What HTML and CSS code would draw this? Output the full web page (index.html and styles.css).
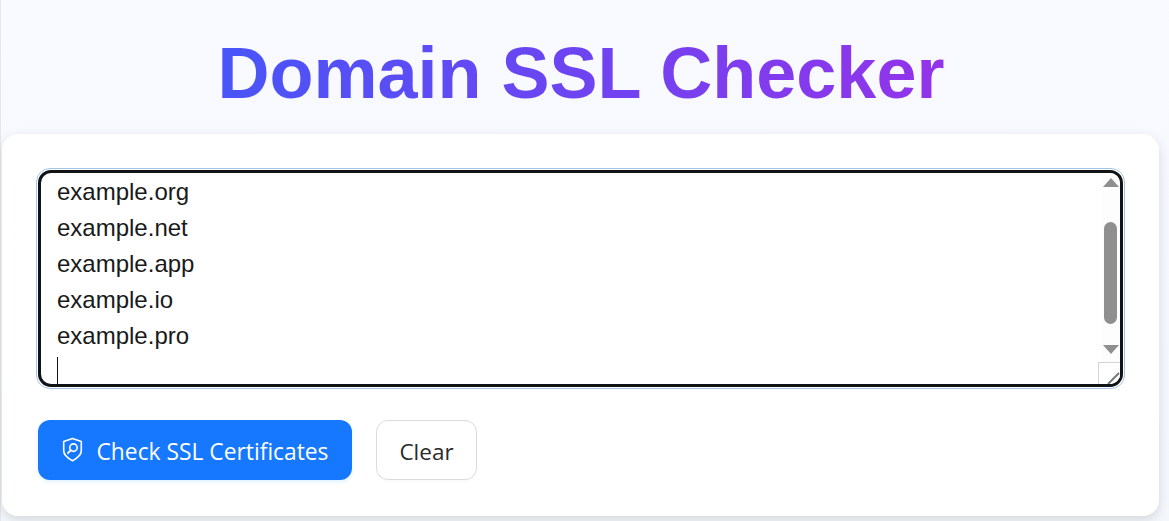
FILE: index.html
```html
<!DOCTYPE html>
<html lang="en">
<head>
<meta charset="utf-8">
<title>Domain SSL Checker</title>
<link rel="stylesheet" href="styles.css">
</head>
<body>
<main class="page">
  <h1 class="title">Domain SSL Checker</h1>
  <section class="card">
    <div class="ring">
      <div class="field">
        <div class="lines">
          <div>example.org</div>
          <div>example.net</div>
          <div>example.app</div>
          <div>example.io</div>
          <div>example.pro</div>
          <div class="caret-line"><span class="caret"></span></div>
        </div>
        <div class="scrollbar">
          <span class="arrow arrow-up"></span>
          <span class="thumb"></span>
          <span class="arrow arrow-down"></span>
        </div>
        <div class="resizer">
          <svg viewBox="0 0 22 22" width="22" height="22" aria-hidden="true"><path d="M10 22 L21 11" stroke="#777" stroke-width="2" fill="none"/></svg>
        </div>
      </div>
    </div>
    <div class="actions">
      <button class="btn btn-primary" type="button">
        <svg class="btn-icon" viewBox="0 0 22 26" width="21" height="25" aria-hidden="true">
          <path d="M11 1.4 L20.2 4.6 V14.4 C20.2 18.6 16.4 22 11 24.8 C5.6 22 1.8 18.6 1.8 14.4 V4.6 Z" fill="none" stroke="#fff" stroke-width="1.7" stroke-linejoin="round"/>
          <circle cx="12" cy="11" r="3.9" fill="none" stroke="#fff" stroke-width="1.7"/>
          <path d="M9.2 13.8 L6.2 16.8" fill="none" stroke="#fff" stroke-width="1.9" stroke-linecap="round"/>
        </svg>
        <span>Check SSL Certificates</span>
      </button>
      <button class="btn btn-default" type="button">Clear</button>
    </div>
  </section>
</main>
</body>
</html>
```
FILE: styles.css
```css
* { box-sizing: border-box; }
html, body { margin: 0; height: 100%; }
body {
  background: #f5f7fb;
  overflow: hidden;
}
.page {
  width: 1169px;
  height: 521px;
  padding-left: 2px;
  padding-right: 10px;
  background: linear-gradient(#f8faff, #f4f7fb);
  border-left: 1px solid #e6e7ec;
  display: flex;
  flex-direction: column;
}
.title {
  margin: 0;
  height: 134px;
  padding-top: 31px;
  text-align: center;
  font: 700 72px/84px "Liberation Sans", Arial, sans-serif;
  color: transparent;
  background: linear-gradient(90deg, #4855f8, #9333ea);
  background-clip: text;
  -webkit-background-clip: text;
  width: max-content;
  align-self: center;
}
.card {
  height: 382px;
  background: #fff;
  border-radius: 16px;
  padding: 34px 34px 36px 34px;
  box-shadow: 0 4px 12px rgba(0, 0, 0, .13);
  margin-left: -1px;
}
.ring {
  height: 221px;
  border: 1px solid #a5c5e6;
  border-radius: 14px;
  padding: 1px;
}
.field {
  position: relative;
  height: 100%;
  border: 3px solid #111417;
  border-radius: 13px;
  overflow: hidden;
  background: #fff;
}
.lines {
  padding-left: 16px;
  margin-top: 1px;
  font: 24px/36px "Liberation Sans", Arial, sans-serif;
  color: #1a1a1a;
}
.caret-line { height: 36px; }
.caret {
  display: block;
  width: 1px;
  height: 27px;
  background: #111;
  transform: translateY(3px);
}
.scrollbar {
  position: absolute;
  top: 0;
  right: 0;
  bottom: 0;
  width: 18px;
  background: #fdfdfd;
}
.arrow {
  position: absolute;
  left: 1px;
  width: 0;
  height: 0;
  border-left: 8px solid transparent;
  border-right: 8px solid transparent;
}
.arrow-up { top: 5px; border-bottom: 9px solid #8f8f8f; }
.arrow-down { bottom: 30px; border-top: 9px solid #8f8f8f; }
.thumb {
  position: absolute;
  left: 2px;
  top: 49px;
  width: 13px;
  height: 102px;
  border-radius: 7px;
  background: #8f8f8f;
}
.resizer {
  position: absolute;
  right: 0;
  bottom: 0;
  width: 22px;
  height: 22px;
  background: #fff;
  border: 1px solid #d4d4d4;
  border-right: 0;
  border-bottom: 0;
}
.resizer svg { display: block; margin: -1px 0 0 -1px; }
.actions {
  display: flex;
  gap: 24px;
  margin-top: 31px;
  padding-left: 2px;
}
.btn {
  height: 60px;
  padding-top: 5px;
  border-radius: 12px;
  font: 400 22.5px/1 "Open Sans", "Noto Sans", sans-serif;
  display: inline-flex;
  align-items: center;
  justify-content: center;
  cursor: pointer;
}
.btn-primary {
  width: 314px;
  gap: 14px;
  font-size: 22.8px;
  background: #1677ff;
  color: #fff;
  border: 0;
  box-shadow: 0 2px 4px rgba(5, 145, 255, .12);
}
.btn-icon { flex: none; margin-top: -5px; }
.btn-default {
  width: 101px;
  background: #fff;
  color: #2a2a2a;
  border: 1px solid #dcdcdc;
  box-shadow: 0 2px 2px rgba(0, 0, 0, .02);
}
```
